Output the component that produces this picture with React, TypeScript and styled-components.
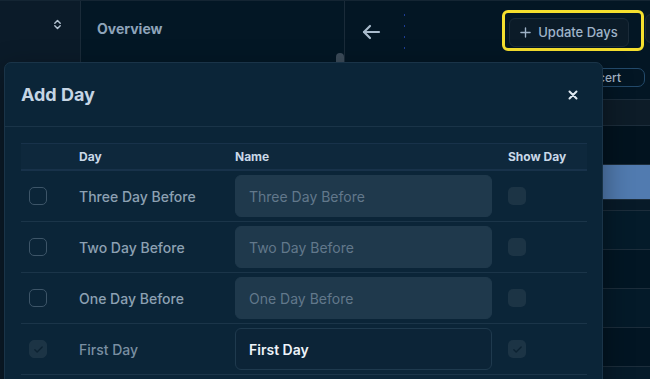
import styled, { createGlobalStyle } from "styled-components";

const GlobalStyle = createGlobalStyle`
    html, body {
        margin: 0;
        padding: 0;
        background: #031624;
        font-family: Inter, "Noto Sans", sans-serif;
        overflow: hidden;
    }
    * { box-sizing: border-box; }
`;

type DayRow = {
    day: string;
    value: string;
    selected: boolean;
    shown: boolean;
};

const days: DayRow[] = [
    { day: "Three Day Before", value: "", selected: false, shown: false },
    { day: "Two Day Before", value: "", selected: false, shown: false },
    { day: "One Day Before", value: "", selected: false, shown: false },
    { day: "First Day", value: "First Day", selected: true, shown: true },
];

const bgRows = [
    { h: 26, bg: "#0d1c28" },
    { h: 39, bg: "#02131f" },
    { h: 35, bg: "#517bb0" },
    { h: 11, bg: "#071a28" },
    { h: 39, bg: "#041b2a" },
    { h: 39, bg: "#021624" },
    { h: 39, bg: "#041a29" },
    { h: 39, bg: "#021523" },
    { h: 39, bg: "#061b2a" },
];

function Check({ color }: { color: string }) {
    return (
        <svg width="11" height="11" viewBox="0 0 24 24" fill="none" stroke={color} strokeWidth="3" strokeLinecap="round" strokeLinejoin="round">
            <path d="M4 12.5l5 5L20 6.5" />
        </svg>
    );
}

export default function App() {
    return (
        <>
            <GlobalStyle />
            <Page>
                <Sidebar>
                    <SideTop>
                        <svg width="9" height="11" viewBox="0 0 10 12" fill="none" stroke="#b5c4d3" strokeWidth="1.6" strokeLinecap="round" strokeLinejoin="round">
                            <path d="M2 4.5L5 1.5L8 4.5" />
                            <path d="M2 7.5L5 10.5L8 7.5" />
                        </svg>
                    </SideTop>
                </Sidebar>
                <Middle>
                    <Heading>Overview</Heading>
                    <ScrollThumb />
                </Middle>
                <Right>
                    <Toolbar>
                        <BackIcon>
                            <svg width="19" height="16" viewBox="0 0 19 16" fill="none" stroke="#a9bbcc" strokeWidth="2.2" strokeLinecap="round" strokeLinejoin="round">
                                <path d="M17 8H2" />
                                <path d="M8 2L2 8l6 6" />
                            </svg>
                        </BackIcon>
                        <DashLine />
                        <Highlight>
                            <UpdateButton>
                                <svg width="11" height="11" viewBox="0 0 12 12" stroke="#9fb3c8" strokeWidth="1.5" strokeLinecap="round">
                                    <path d="M6 1v10M1 6h10" />
                                </svg>
                                Update Days
                            </UpdateButton>
                        </Highlight>
                        <EdgeButton />
                    </Toolbar>
                    <PillRow>
                        <Pill>Insert Concert</Pill>
                    </PillRow>
                    <BgTable>
                        {bgRows.map((r, i) => (
                            <BgRow key={i} $bg={r.bg} style={{ height: r.h }} />
                        ))}
                    </BgTable>
                </Right>

                <Modal>
                    <ModalHeader>
                        <Title>Add Day</Title>
                        <Close>
                            <svg width="10" height="10" viewBox="0 0 10 10" stroke="#dfe8f0" strokeWidth="2" strokeLinecap="round">
                                <path d="M1.5 1.5l7 7M8.5 1.5l-7 7" />
                            </svg>
                        </Close>
                    </ModalHeader>
                    <ModalBody>
                        <Table>
                            <HeadRow>
                                <Cell />
                                <HeadCell>Day</HeadCell>
                                <HeadCell>Name</HeadCell>
                                <ShowCell>Show Day</ShowCell>
                            </HeadRow>
                            {days.map((d) => (
                                <Row key={d.day}>
                                    <BoxCell>
                                        <Box $checked={d.selected}>{d.selected && <Check color="#0c2232" />}</Box>
                                    </BoxCell>
                                    <DayCell $dim={d.selected}>{d.day}</DayCell>
                                    <NameCell>
                                        <NameInput $filled={!!d.value} placeholder={d.day} defaultValue={d.value} />
                                    </NameCell>
                                    <ShowCell>
                                        <ShowBox>{d.shown && <Check color="#0c2232" />}</ShowBox>
                                    </ShowCell>
                                </Row>
                            ))}
                        </Table>
                    </ModalBody>
                </Modal>
            </Page>
        </>
    );
}

const Page = styled.div`
    position: relative;
    width: 650px;
    height: 379px;
    display: grid;
    grid-template-columns: 81px 264px minmax(0, 1fr);
    border-top: 1px solid #142533;
    overflow: hidden;
`;

const Sidebar = styled.div`
    background: #0b1b29;
    border-right: 1px solid #1a2b39;
`;

const SideTop = styled.div`
    height: 46px;
    display: flex;
    align-items: center;
    justify-content: flex-end;
    padding-right: 18px;
`;

const Middle = styled.div`
    position: relative;
    background: #031725;
    border-right: 1px solid #1a2b39;
    padding: 19px 16px;
`;

const Heading = styled.h2`
    margin: 0;
    font-size: 14px;
    font-weight: 700;
    color: #8ea4ba;
`;

const ScrollThumb = styled.div`
    position: absolute;
    right: 0;
    top: 52px;
    width: 8px;
    height: 14px;
    border-radius: 4px 4px 0 0;
    background: #3b4b59;
`;

const Right = styled.div`
    min-width: 0;
    overflow: hidden;
    background: #031624;
    display: flex;
    flex-direction: column;
`;

const Toolbar = styled.div`
    height: 61px;
    flex-shrink: 0;
    display: flex;
    align-items: center;
    padding: 0 0 0 17px;
`;

const BackIcon = styled.span`
    display: flex;
    flex-shrink: 0;
`;

const DashLine = styled.div`
    width: 1px;
    height: 36px;
    margin-left: 23px;
    flex-shrink: 0;
    background: repeating-linear-gradient(to bottom, #1d3c96 0 2px, transparent 2px 11px);
`;

const Highlight = styled.div`
    margin-left: 97px;
    margin-top: -3px;
    flex-shrink: 0;
    padding: 5px 12px 1px 4px;
    border: 3px solid #f5df2e;
    border-radius: 6px;
`;

const UpdateButton = styled.button`
    width: 120px;
    height: 29px;
    display: flex;
    align-items: center;
    justify-content: center;
    gap: 7px;
    border: 1px solid #1a2a38;
    border-radius: 6px;
    background: #0b1b28;
    color: #9fb3c8;
    font-family: Inter, sans-serif;
    font-size: 13px;
    font-weight: 500;
`;

const EdgeButton = styled.div`
    margin-left: 1px;
    margin-top: -6px;
    width: 30px;
    height: 29px;
    border: 1px solid #1a2a38;
    border-radius: 6px;
    background: #0a1a27;
    flex-shrink: 0;
`;

const PillRow = styled.div`
    height: 38px;
    flex-shrink: 0;
    display: flex;
    justify-content: flex-end;
    padding: 6px 5px 0 0;
    border-bottom: 1px solid #1c2d3b;
`;

const Pill = styled.div`
    height: 19px;
    padding: 0 23px 0 10px;
    display: flex;
    align-items: center;
    border: 1px solid #234a6b;
    border-radius: 7px;
    color: #a6b8ca;
    font-size: 12px;
    font-weight: 500;
    white-space: nowrap;
`;

const BgTable = styled.div`
    display: flex;
    flex-direction: column;
`;

const BgRow = styled.div<{ $bg: string }>`
    background: ${({ $bg }) => $bg};
    border-bottom: 1px solid #1c2d3b;
    flex-shrink: 0;
`;

const Modal = styled.div`
    position: absolute;
    left: 4px;
    top: 61px;
    width: 599px;
    height: 340px;
    background: #0b2538;
    border: 1px solid #1a3448;
    border-radius: 7px 7px 0 0;
    box-shadow: 0 10px 30px rgba(0, 0, 0, 0.4);
`;

const ModalHeader = styled.div`
    height: 64px;
    display: flex;
    align-items: center;
    justify-content: space-between;
    padding: 0 24px 0 16px;
    border-bottom: 1px solid #1a3448;
`;

const Title = styled.h1`
    margin: 0;
    font-size: 18px;
    font-weight: 700;
    color: #c5d5e4;
`;

const Close = styled.button`
    display: flex;
    padding: 0;
    border: none;
    background: none;
`;

const ModalBody = styled.div`
    padding: 16px 15px 0 16px;
`;

const Table = styled.div`
    display: flex;
    flex-direction: column;
`;

const RowBase = styled.div`
    display: grid;
    grid-template-columns: 46px 156px 281px 1fr;
    align-items: center;
    border-bottom: 1px solid #1b3549;
`;

const HeadRow = styled(RowBase)`
    height: 28px;
    background: #0e283c;
    border-top: 1px solid #18324a;
    border-bottom: 2px solid #18324a;
`;

const Row = styled(RowBase)`
    height: 51px;
`;

const Cell = styled.div``;

const HeadCell = styled.div`
    padding-left: 12px;
    font-size: 12px;
    font-weight: 700;
    color: #c9d8e8;
`;

const BoxCell = styled.div`
    padding-left: 8px;
    display: flex;
`;

const Box = styled.div<{ $checked: boolean }>`
    width: 18px;
    height: 18px;
    border-radius: 5px;
    display: flex;
    align-items: center;
    justify-content: center;
    border: 1px solid ${({ $checked }) => ($checked ? "#1c3445" : "#3d5568")};
    background: ${({ $checked }) => ($checked ? "#1c3445" : "transparent")};
`;

const DayCell = styled.div<{ $dim: boolean }>`
    padding-left: 12px;
    font-size: 14px;
    font-weight: 500;
    color: ${({ $dim }) => ($dim ? "#7a8fa2" : "#8da1b3")};
`;

const NameCell = styled.div`
    padding: 0 12px;
`;

const NameInput = styled.input<{ $filled: boolean }>`
    width: 100%;
    height: 42px;
    padding: 0 13px;
    border-radius: 6px;
    border: 1px solid ${({ $filled }) => ($filled ? "#1f3a4e" : "#1f394c")};
    background: ${({ $filled }) => ($filled ? "#0c2437" : "#1f394c")};
    color: #eef4fa;
    font-family: Inter, sans-serif;
    font-size: 14px;
    font-weight: 600;
    outline: none;

    &::placeholder {
        color: #62788b;
        font-weight: 400;
    }
`;

const ShowCell = styled.div`
    padding-left: 4px;
    display: flex;
    font-size: 12px;
    font-weight: 700;
    color: #c9d8e8;
`;

const ShowBox = styled.div`
    width: 18px;
    height: 18px;
    border-radius: 5px;
    background: #1c3445;
    display: flex;
    align-items: center;
    justify-content: center;
`;
